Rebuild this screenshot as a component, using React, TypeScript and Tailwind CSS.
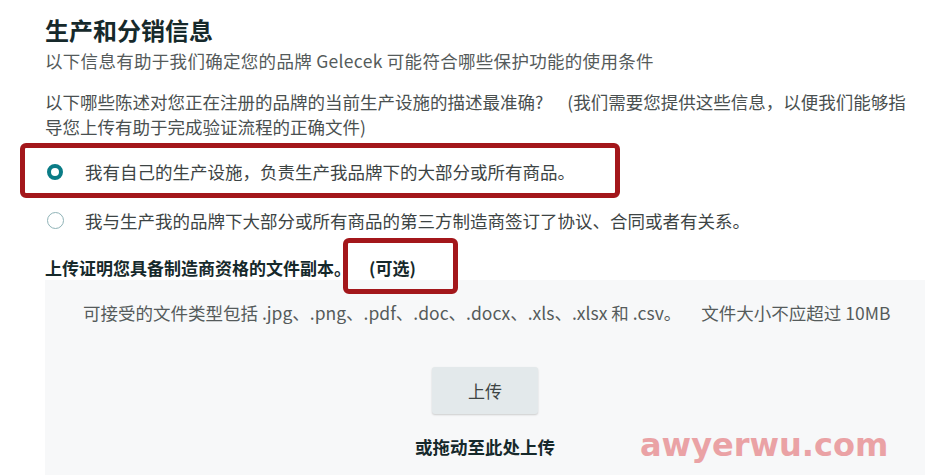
import React from "react";

export default function App() {
  return (
    <div
      className="relative w-[935px] h-[475px] overflow-hidden bg-white text-[#3d4444]"
      style={{ fontFamily: '"Noto Sans CJK SC", "Noto Sans", "Liberation Sans", sans-serif' }}
    >
      <div className="pl-[45px] pr-[10px] pt-[16px]">
        <h1 className="text-[24px] leading-[28px] font-bold text-[#16292b]">生产和分销信息</h1>
        <p className="mt-[5px] text-[17.5px] leading-[24px] text-[#555b5b] tracking-[0.3px]">
          以下信息有助于我们确定您的品牌 Gelecek 可能符合哪些保护功能的使用条件
        </p>
        <p className="mt-[16px] text-[17.5px] leading-[25px] text-[#4a5050]">
          以下哪些陈述对您正在注册的品牌的当前生产设施的描述最准确?<span className="inline-block w-[24px]" />(我们需要您提供这些信息，以便我们能够指
          <br />
          导您上传有助于完成验证流程的正确文件)
        </p>
        <div className="mt-[20px] flex items-center h-[25px] pl-[2px]">
          <span className="w-[16px] h-[16px] rounded-full border-[4.5px] border-[#0a7c86] bg-white shrink-0" />
          <span className="ml-[22px] text-[17.5px] leading-[25px] text-[#3d4444]">
            我有自己的生产设施，负责生产我品牌下的大部分或所有商品。
          </span>
        </div>
        <div className="mt-[24px] flex items-center h-[25px] pl-[2px]">
          <span className="w-[17px] h-[17px] rounded-full border-[1.5px] border-[#8fb3b7] bg-white shrink-0" />
          <span className="ml-[21px] text-[17.5px] leading-[25px] text-[#3d4444]">
            我与生产我的品牌下大部分或所有商品的第三方制造商签订了协议、合同或者有关系。
          </span>
        </div>
        <div className="mt-[22px] text-[17px] leading-[25px] font-bold text-[#16292b]">
          上传证明您具备制造商资格的文件副本。<span className="inline-block w-[18px]" />(可选)
        </div>
        <div className="w-[880px] h-[200px] bg-[#f7f8f9] pt-[20px] flex flex-col items-center">
          <p className="self-start pl-[38px] text-[17.5px] leading-[25px] text-[#555b5b]">
            可接受的文件类型包括 .jpg、.png、.pdf、.doc、.docx、.xls、.xlsx 和 .csv。<span className="inline-block w-[20px]" />文件大小不应超过 10MB
          </p>
          <button className="mt-[42px] w-[106px] h-[47px] rounded-[3px] bg-[#e3e9eb] shadow-[0_1px_2px_rgba(0,0,0,0.18)] text-[17px] text-[#3d4444]">
            上传
          </button>
          <div className="mt-[20px] text-[17.5px] leading-[25px] font-bold text-[#16292b]">或拖动至此处上传</div>
        </div>
      </div>

      {/* annotation boxes */}
      <div className="absolute left-[20px] top-[143px] w-[600px] h-[55px] border-[5px] border-[#a3171b] rounded-[6px]" />
      <div className="absolute left-[343px] top-[238px] w-[115px] h-[56px] border-[5px] border-[#a3171b] rounded-[6px]" />

      {/* watermark */}
      <div
        className="absolute left-[640px] top-[425px] text-[32px] leading-[40px] font-bold text-[#eaa2a5]"
        style={{ fontFamily: '"DejaVu Sans", sans-serif' }}
      >
        awyerwu.com
      </div>
    </div>
  );
}
